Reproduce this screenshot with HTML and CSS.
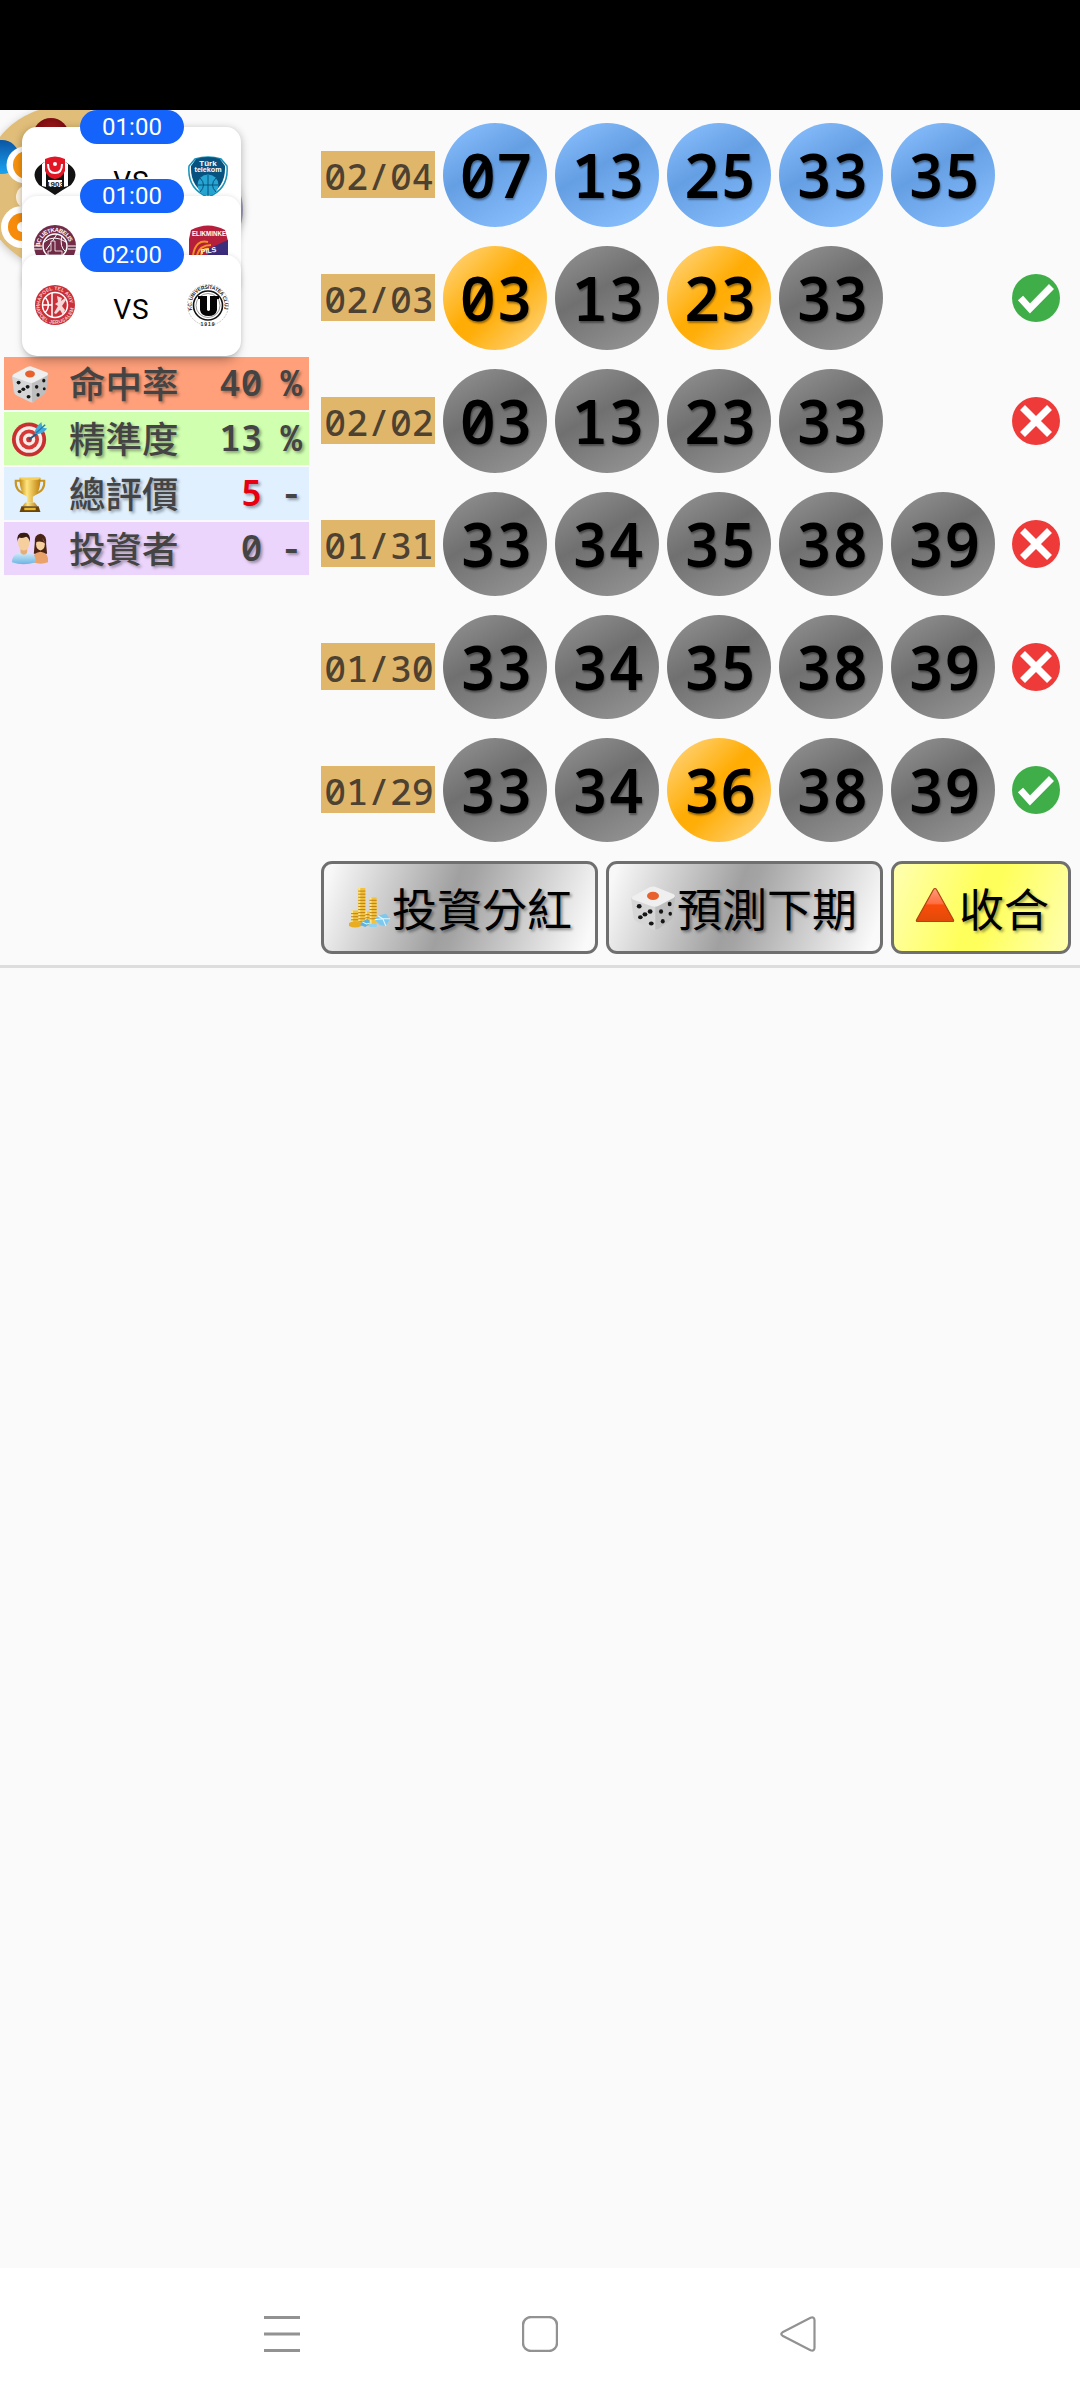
FILE: index.html
```
<!DOCTYPE html>
<html lang="zh-Hant">
<head>
  <meta charset="UTF-8" />
  <meta name="viewport" content="width=device-width, initial-scale=1.0"/>
  <title>投資分紅</title>
  <link rel="stylesheet" href="styles.css">
</head>
<body>
  <svg class="defs" aria-hidden="true">
    <defs>
      <linearGradient id="gold" x1="0" x2="1">
        <stop offset="0" stop-color="#c48a12"/><stop offset=".35" stop-color="#ffe680"/><stop offset="1" stop-color="#c07f0c"/>
      </linearGradient>
      <linearGradient id="flame" x1="0" y1="0" x2="0" y2="1">
        <stop offset="0" stop-color="#ff9a7a"/><stop offset=".45" stop-color="#ff6f42"/><stop offset=".5" stop-color="#fa4c0c"/><stop offset="1" stop-color="#e04a08"/>
      </linearGradient>
      <linearGradient id="shirt" x1="0" y1="0" x2="0" y2="1">
        <stop offset="0" stop-color="#d6effc"/><stop offset="1" stop-color="#6cb4e2"/>
      </linearGradient>
      <radialGradient id="redBall"><stop offset="0" stop-color="#c52222"/><stop offset="1" stop-color="#7b0d12"/></radialGradient>
      <linearGradient id="blueBall" x1="0" y1="0" x2="0" y2="1"><stop offset="0" stop-color="#0b55a4"/><stop offset="1" stop-color="#19a4f2"/></linearGradient>

      <symbol id="dice" viewBox="0 0 40 40">
        <path d="M1 11 22 18 24 39Q22 40 19 38.500L6 32Q3.500 31 3 28Z" fill="#d6d6d6"/>
        <path d="M22 18 39.500 10 37 28Q36.500 30 34 31.500L25 38Q23.500 39 22 39Z" fill="#bebebe"/>
        <path d="M3 9.500 17 2Q20 .5 23 2L38 8Q40 9.500 38 11L25 18Q22 19.500 19 18.500L2.500 12.500Q.5 11 3 9.500Z" fill="#efefef"/>
        <ellipse cx="20" cy="9.500" rx="5.200" ry="3.600" fill="#e8602c"/>
        <g fill="#161616">
          <ellipse cx="8" cy="18.500" rx="2.100" ry="1.900"/><ellipse cx="17.500" cy="23" rx="2.100" ry="1.900"/><ellipse cx="13" cy="25.500" rx="2.100" ry="1.900"/><ellipse cx="9" cy="28" rx="2" ry="1.800"/><ellipse cx="18.500" cy="33.500" rx="2.100" ry="1.800"/>
          <ellipse cx="34.500" cy="16.500" rx="1.700" ry="1.900"/><ellipse cx="27" cy="23" rx="1.800" ry="2"/><ellipse cx="35" cy="25" rx="1.500" ry="1.700"/><ellipse cx="28.500" cy="31.500" rx="1.700" ry="1.900"/>
        </g>
      </symbol>

      <symbol id="target" viewBox="0 0 40 40">
        <circle cx="19" cy="20.500" r="18" fill="#c92f30"/>
        <circle cx="19" cy="20.500" r="14" fill="#f7ece8"/>
        <circle cx="19" cy="20.500" r="10.500" fill="#d43b38"/>
        <circle cx="19" cy="20.500" r="6.500" fill="#f7ece8"/>
        <circle cx="19" cy="20.500" r="3" fill="#cf3333"/>
        <path d="M19 20.500 30 12" stroke="#1b5a86" stroke-width="2"/>
        <path d="M25 14Q25 8 32 2L33 8 38 9Q34 15 26 15Z" fill="#44a8d8"/>
        <path d="M26 14 36 5" stroke="#1f7db4" stroke-width="1.500"/>
      </symbol>

      <symbol id="trophy" viewBox="0 0 40 40">
        <path d="M10 6H5Q4 17 15 20M30 6h5Q36 17 25 20" fill="none" stroke="#c8951f" stroke-width="2.200"/>
        <path d="M9 3H31Q31 20 23 23V29H17V23Q9 20 9 3Z" fill="url(#gold)"/>
        <ellipse cx="20" cy="4" rx="11" ry="1.500" fill="#f5d15b"/>
        <path d="M15 29H25L28 33H12Z" fill="url(#gold)"/>
        <path d="M11 33H29L31 39H9Z" fill="#6b4508"/>
        <path d="M14 34.500H26V37H14Z" fill="#e8b92f"/>
      </symbol>

      <symbol id="people" viewBox="0 0 40 40">
        <path d="M25 14Q24 5 31 4Q38 5 37 15L38 25H24Z" fill="#4a2414"/>
        <path d="M23 34Q22 24 31 23Q40 24 39 34Q31 37 23 34Z" fill="#e9a36a"/>
        <ellipse cx="31" cy="15" rx="4.600" ry="6.500" fill="#f6cf9e"/>
        <path d="M26 13Q27 7 32 7L36 14Q31 11 26 13Z" fill="#4a2414"/>
        <path d="M1 34Q1 24 14 23Q27 24 26 34Q13 38 1 34Z" fill="url(#shirt)"/>
        <path d="M10 19H17V24Q13.500 28 10 24Z" fill="#e5ad78"/>
        <ellipse cx="13.500" cy="13.500" rx="6" ry="8" fill="#f6cf9e"/>
        <path d="M7 13Q5 3 13 3Q21 2 20 13Q19 8 16 7Q11 9 9 8Q7 9 7 13Z" fill="#3a1d10"/>
      </symbol>

      <symbol id="coins" viewBox="0 0 40 40">
        <path d="M9 1H16V38H9ZM20 10H27V36H20ZM2 23H9V38H2ZM16 24H21V38H16Z" fill="#f3c23c"/>
        <path d="M10 1V37M21 10V36M3 23V38M16.500 24V37" stroke="#fde58a" stroke-width="2"/>
        <path d="M9 4H16M9 7H16M9 10H16M9 13H16M9 16H16M9 19H16M9 22H16M9 25H16M9 28H16M9 31H16M9 34H16M20 13H27M20 16H27M20 19H27M20 22H27M20 25H27M20 28H27M20 31H27M2 26H9M2 29H9M2 32H9M2 35H9M16 27H20M16 30H20M16 33H20" stroke="#b67a10" stroke-width=".9"/>
        <path d="M0 35Q6 32 12 35V38Q6 41 0 38Z" fill="#e9ad22"/>
        <path d="M28 28 36 26 40 31 36 38 30 37 25 32Z" fill="#7cc8ef"/>
        <path d="M28 28 33 31 40 31M33 31 36 38M33 31 25 32" stroke="#e2f7ff" fill="none"/>
        <path d="M13 34 18 31 21 35 16 39 11 37Z" fill="#59b4e4"/>
        <path d="M13 34 17 36 21 35" stroke="#e2f7ff" fill="none"/>
        <path d="M20 36H27V39H20Z" fill="#8fd1f2"/>
      </symbol>

      <symbol id="triangle" viewBox="0 0 40 36">
        <path d="M20 1.500Q21 1.500 21.500 2.500L38.500 33Q39 34.500 37.500 34.500H2.500Q1 34.500 1.500 33L18.500 2.500Q19 1.500 20 1.500Z" fill="url(#flame)" stroke="#b0450e" stroke-width="1.200"/>
      </symbol>

      <symbol id="hit" viewBox="0 0 48 48">
        <circle cx="24" cy="24" r="24" fill="#3fae49"/>
        <path d="M8.500 24 18 34.500 39.500 12.500" fill="none" stroke="#fff" stroke-width="7"/>
      </symbol>
      <symbol id="miss" viewBox="0 0 48 48">
        <circle cx="24" cy="24" r="24" fill="#ee3a39"/>
        <path d="M10.500 10.500 37.500 37.500M37.500 10.500 10.500 37.500" stroke="#fff" stroke-width="7"/>
      </symbol>

      <symbol id="besiktas" viewBox="0 0 42 42">
        <path d="M5 10Q21-4 37 10Q46 18 37 29Q30 33 21 39Q12 33 5 29Q-4 18 5 10Z" fill="#121212"/>
        <path d="M8 8 12 5V31L8 30ZM30 5 34 8V30L30 31ZM14 24H28V31H14Z" fill="#fff"/>
        <path d="M11 3Q21-2 31 3V15Q28 22 21 23Q14 22 11 15Z" fill="#e31626"/>
        <path d="M14 8Q14 17 21 17Q28 17 28 8" fill="none" stroke="#fff" stroke-width="2"/>
        <circle cx="21" cy="8" r="2" fill="#fff"/>
        <text x="21" y="31" font-size="8" font-weight="700" text-anchor="middle" fill="#222">1903</text>
      </symbol>

      <symbol id="telekom" viewBox="0 0 42 42">
        <path d="M8 3Q21-1 34 3L40 10Q42 33 21 41Q0 33 2 10Z" fill="#fff" stroke="#1691b8" stroke-width="1.500"/>
        <path d="M9 3Q21-1 33 3L38 10Q39 31 21 39Q3 31 4 10Z" fill="#07527f"/>
        <circle cx="21" cy="29" r="10.500" fill="#27a5d2"/>
        <path d="M21 19V40M10.500 29H31.500M13 22Q20 29 13 36M29 22Q22 29 29 36" fill="none" stroke="#07527f"/>
        <text x="21" y="9.500" font-size="8" font-weight="700" text-anchor="middle" fill="#fff">Türk</text>
        <text x="21" y="16" font-size="7" font-weight="700" text-anchor="middle" textLength="27" lengthAdjust="spacingAndGlyphs" fill="#fff">telekom</text>
      </symbol>

      <symbol id="letkabelis" viewBox="0 0 42 42">
        <circle cx="21" cy="21" r="21" fill="#722c48"/>
        <path id="arcA" d="M6 22A15 15 0 0 1 36 22" fill="none"/>
        <circle cx="21" cy="21" r="12" fill="#722c48" stroke="#fff" stroke-width="1.500"/>
        <path d="M10 17Q20 9 32 17M12 25Q20 14 23 9M28 11Q25 22 32 27" fill="none" stroke="#fff"/>
        <path d="M0 21H8M34 21H42M0 24H8M34 24H42" stroke="#fff"/>
        <text font-size="6" font-weight="700" fill="#fff"><textPath href="#arcA" textLength="42">BC LIETKABELIS</textPath></text>
        <path d="M17 16H21V26H28V30H14V26H17Z" fill="#722c48" stroke="#fff" stroke-width=".8"/>
      </symbol>

      <symbol id="dinamo" viewBox="0 0 42 42">
        <path d="M4 5Q21-4 38 5L41 16V42H2V14Z" fill="#b51f3c"/>
        <path d="M21 24 41 15V42H21Z" fill="#3c2d7d"/>
        <text x="22" y="11" font-size="8" font-weight="700" text-anchor="middle" textLength="34" lengthAdjust="spacingAndGlyphs" fill="#fff">ELIKMINKE</text>
        <path d="M6 30Q9 14 21 17M10 30Q13 20 24 20M14 30Q15 23 22 24" fill="none" stroke="#f29222" stroke-width="2"/>
        <text x="22" y="28" font-size="7" font-weight="700" transform="rotate(-10 22 28)" text-anchor="middle" fill="#fff">PILS</text>
      </symbol>

      <symbol id="hapoel" viewBox="0 0 42 42">
        <circle cx="21" cy="21" r="20" fill="#c93039"/>
        <path id="arcB" d="M6 21A15 15 0 0 1 36 21" fill="none"/>
        <path id="arcC" d="M2 21A19 19 0 0 0 40 21" fill="none"/>
        <text font-size="5" font-weight="700" fill="#f5c9c9"><textPath href="#arcB" textLength="45">HAPOEL TEL AVIV</textPath></text>
        <text font-size="5" font-weight="700" fill="#f5c9c9"><textPath href="#arcC" textLength="56">HAPOEL JERUSALEM</textPath></text>
        <circle cx="21" cy="21" r="12.500" fill="#c93039" stroke="#fff" stroke-width="1.500"/>
        <path d="M18 9V33M8.500 21H18M11 13Q18 21 11 29" fill="none" stroke="#fff" stroke-width="1.500"/>
        <path d="M23 12 28 14 27 17 31 14 32 16 28 22 31 26 29 31 26 26 22 30 20 29 24 22 21 20 24 18Z" fill="#f7d8d6"/>
      </symbol>

      <symbol id="ucluj" viewBox="0 0 42 42">
        <circle cx="21" cy="21" r="20.500" fill="#fff" stroke="#bbb" stroke-width=".8" stroke-dasharray="2 1"/>
        <path id="arcD" d="M5.200 26A16.500 16.500 0 1 1 36.800 26" fill="none"/>
        <text font-size="5" font-weight="700" fill="#222"><textPath href="#arcD" textLength="60">F.C. UNIVERSITATEA CLUJ</textPath></text>
        <circle cx="21" cy="21.500" r="14.500" fill="#fff" stroke="#111" stroke-width="1.600"/>
        <circle cx="21" cy="21.500" r="12" fill="#fff" stroke="#555" stroke-width=".6"/>
        <path d="M11 12H20V26Q21.500 28 23 26V12H32V15H30V26Q29 32 21.500 32Q14 32 13 26V15H11Z" fill="#050505"/>
        <text x="21" y="41.500" font-size="5" font-weight="700" text-anchor="middle" letter-spacing="1" fill="#222">1919</text>
      </symbol>
    </defs>
  </svg>

  <div class="status-bar"></div>

  <main class="content">
    <section class="result">
      <div class="side">
        <div class="promo">
          <svg class="lotto" viewBox="0 0 260 170">
            <circle cx="64" cy="78" r="82" fill="#e0bd78"/>
            <circle cx="51" cy="26" r="18" fill="url(#redBall)"/>
            <circle cx="2" cy="47" r="17" fill="url(#blueBall)"/>
            <circle cx="28" cy="87" r="12" fill="#fff3df"/>
            <circle cx="25" cy="55" r="18.500" fill="#fff"/>
            <circle cx="27" cy="55" r="14" fill="#f7930d"/>
            <circle cx="22" cy="117" r="21" fill="#fff"/>
            <circle cx="22" cy="117" r="14" fill="#f78c0c"/>
            <circle cx="22" cy="117" r="5" fill="#fff"/>
            <circle cx="191" cy="100" r="52" fill="#a79dbd"/>
          </svg>

          <div class="matches">
            <div class="match first">
              <span class="time">01:00</span>
              <svg class="logo"><use href="#besiktas"/></svg>
              <span class="vs">VS</span>
              <svg class="logo"><use href="#telekom"/></svg>
            </div>
            <div class="match second">
              <span class="time">01:00</span>
              <svg class="logo"><use href="#letkabelis"/></svg>
              <svg class="logo"><use href="#dinamo"/></svg>
            </div>
            <div class="match third">
              <span class="time">02:00</span>
              <svg class="logo"><use href="#hapoel"/></svg>
              <span class="vs">VS</span>
              <svg class="logo"><use href="#ucluj"/></svg>
            </div>
          </div>
        </div>

        <div class="stats">
          <div class="stat rate"><svg class="stat-icon"><use href="#dice"/></svg><span class="name">命中率</span><span class="value">40</span><span class="unit">%</span></div>
          <div class="stat accuracy"><svg class="stat-icon"><use href="#target"/></svg><span class="name">精準度</span><span class="value">13</span><span class="unit">%</span></div>
          <div class="stat score"><svg class="stat-icon"><use href="#trophy"/></svg><span class="name">總評價</span><span class="value red">5</span><span class="unit">-</span></div>
          <div class="stat investor"><svg class="stat-icon"><use href="#people"/></svg><span class="name">投資者</span><span class="value">0</span><span class="unit">-</span></div>
        </div>
      </div>

      <div class="draws">
        <div class="draw">
          <span class="date">02/04</span>
          <div class="balls"><span class="ball blue">07</span><span class="ball blue">13</span><span class="ball blue">25</span><span class="ball blue">33</span><span class="ball blue">35</span></div>
        </div>
        <div class="draw">
          <span class="date">02/03</span>
          <div class="balls"><span class="ball orange">03</span><span class="ball">13</span><span class="ball orange">23</span><span class="ball">33</span></div>
          <svg class="mark"><use href="#hit"/></svg>
        </div>
        <div class="draw">
          <span class="date">02/02</span>
          <div class="balls"><span class="ball">03</span><span class="ball">13</span><span class="ball">23</span><span class="ball">33</span></div>
          <svg class="mark"><use href="#miss"/></svg>
        </div>
        <div class="draw">
          <span class="date">01/31</span>
          <div class="balls"><span class="ball">33</span><span class="ball">34</span><span class="ball">35</span><span class="ball">38</span><span class="ball">39</span></div>
          <svg class="mark"><use href="#miss"/></svg>
        </div>
        <div class="draw">
          <span class="date">01/30</span>
          <div class="balls"><span class="ball">33</span><span class="ball">34</span><span class="ball">35</span><span class="ball">38</span><span class="ball">39</span></div>
          <svg class="mark"><use href="#miss"/></svg>
        </div>
        <div class="draw">
          <span class="date">01/29</span>
          <div class="balls"><span class="ball">33</span><span class="ball">34</span><span class="ball orange">36</span><span class="ball">38</span><span class="ball">39</span></div>
          <svg class="mark"><use href="#hit"/></svg>
        </div>

        <div class="buttons">
          <button class="btn wide"><svg class="btn-icon"><use href="#coins"/></svg>投資分紅</button>
          <button class="btn wide"><svg class="btn-icon dice-icon"><use href="#dice"/></svg>預測下期</button>
          <button class="btn yellow"><svg class="btn-icon up"><use href="#triangle"/></svg>收合</button>
        </div>
      </div>
    </section>
  </main>

  <nav class="nav-bar">
    <svg viewBox="0 0 36 36"><path d="M0 1.500H36M0 18H36M0 34.500H36" stroke-width="3"/></svg>
    <svg viewBox="0 0 36 36"><rect x="1" y="1" width="34" height="34" rx="8" stroke-width="2.400"/></svg>
    <svg viewBox="0 0 36 36"><path d="M2.500 16.300 30.500 1.800Q34.300 .5 34.500 4V32Q34.300 35.500 30.500 34.200L2.500 19.700Q0 18 2.500 16.300Z" stroke-width="2.200"/></svg>
  </nav>
</body>
</html>
```

FILE: styles.css
```
* {
  box-sizing: border-box;
}

body {
  margin: 0;
  height: 2400px;
  display: flex;
  flex-direction: column;
  background: #fafafa;
  font-family: "Noto Sans CJK TC", "Noto Sans", sans-serif;
  overflow: hidden;
}

.defs {
  position: absolute;
  width: 0;
  height: 0;
}

.status-bar {
  height: 110px;
  background: #000;
}

.content {
  flex: 1;
}

.result {
  display: flex;
  height: 858px;
  border-bottom: 3px solid #ddd;
}

.side {
  width: 321px;
  padding-left: 4px;
}

/* floating match cards over the lottery logo */
.promo {
  position: relative;
  height: 247px;
  margin-left: -4px;
}

.lotto {
  position: absolute;
  left: 0;
  top: 0;
  width: 260px;
  height: 170px;
  filter: drop-shadow(0 2px 4px rgba(0, 0, 0, 0.2));
}

.matches {
  position: absolute;
  left: 22px;
  top: 17px;
  z-index: 1;
}

.match {
  position: relative;
  display: flex;
  align-items: flex-start;
  justify-content: space-between;
  width: 219px;
  height: 101px;
  padding: 29px 12px 0;
  background: #fff;
  border-radius: 15px;
  box-shadow: 0 2px 9px rgba(0, 0, 0, 0.3);
}

.second {
  margin-top: -32px;
  box-shadow: 0 0 5px rgba(0, 0, 0, 0.12);
}

.third {
  margin-top: -42px;
  box-shadow: 0 0 5px rgba(0, 0, 0, 0.12), 0 8px 12px -5px rgba(0, 0, 0, 0.35);
}

.time {
  position: absolute;
  left: 58px;
  top: -17px;
  width: 104px;
  height: 34px;
  border-radius: 17px;
  background: #1463fb;
  color: #fff;
  font: 400 24px/34px Roboto, sans-serif;
  text-align: center;
}

.logo {
  width: 42px;
  height: 42px;
  font-family: "Liberation Sans", Arial, sans-serif;
}

.vs {
  color: #000;
  font: 400 28px/51px Roboto, sans-serif;
  letter-spacing: 1px;
}

.stats {
  display: flex;
  flex-direction: column;
  gap: 2px;
  width: 305px;
}

.stat {
  display: flex;
  align-items: center;
  height: 53px;
  padding: 0 7px;
  color: #444;
  font-size: 36.5px;
  font-weight: 500;
  text-shadow: 2px 2px 3px rgba(0, 0, 0, 0.35);
}

.rate { background: #ffa07a; }
.accuracy { background: #d0ffb0; }
.score { background: #e0f0ff; }
.investor { background: #ecd5fc; }

.stat-icon {
  width: 38px;
  height: 38px;
}

.name {
  margin-left: 20px;
  line-height: 51px;
  height: 53px;
}

.value,
.unit {
  height: 53px;
  font-family: "Noto Sans Mono", "Noto Sans", monospace;
  font-size: 36px;
  font-weight: 600;
  line-height: 51px;
}

.value {
  flex: 1;
  text-align: right;
}

.unit {
  margin-left: 18px;
}

.red {
  color: #e60012;
}

.draws {
  flex: 1;
  padding-top: 3px;
}

.draw {
  display: flex;
  align-items: center;
  height: 123px;
  padding-right: 20px;
}

.date {
  width: 114px;
  height: 47px;
  margin-right: 8px;
  padding-left: 2px;
  background: #e0b76a;
  color: #4d4132;
  font: 500 36.5px/50px "Noto Sans Mono", "Noto Sans", monospace;
  text-align: center;
}

.balls {
  display: flex;
  gap: 8px;
}

.ball {
  width: 104px;
  height: 104px;
  padding-left: 2px;
  border-radius: 50%;
  background: linear-gradient(150deg, #8e8e8e 8%, #707070 42%, #929292 90%);
  color: #000;
  font: 600 61px/103px "Noto Sans Mono", "Noto Sans", monospace;
  text-align: center;
  text-shadow: 1px 2px 2px rgba(0, 0, 0, 0.4);
}

.blue {
  background: linear-gradient(150deg, #83bafa 10%, #659fe3 42%, #83bafa 85%);
}

.orange {
  background: linear-gradient(135deg, #ffd275 8%, #ffad05 45%, #ffae08 55%, #ffd070 90%);
}

.mark {
  width: 48px;
  height: 48px;
  margin-left: auto;
}

.buttons {
  display: flex;
  gap: 8px;
  padding-top: 10px;
}

.btn {
  display: flex;
  align-items: center;
  justify-content: center;
  width: 180px;
  height: 93px;
  padding: 0 0 0 2px;
  border: 3px solid #6f6f6f;
  border-radius: 11px;
  background: linear-gradient(110deg, #f8f8f8 3%, #a0a0a0 46%, #a4a4a4 51%, #fafafa 96%);
  color: #000;
  font: 400 45px/87px "Noto Sans CJK TC", sans-serif;
  text-shadow: 2px 2px 3px rgba(0, 0, 0, 0.4);
}

.wide {
  width: 277px;
}

.yellow {
  background: linear-gradient(110deg, #ffffa8 5%, #ffff5c 45%, #ffff5c 55%, #ffffa8 95%);
}

.btn-icon {
  width: 41px;
  height: 41px;
  margin-right: 2px;
}

.dice-icon {
  width: 46px;
  height: 46px;
  margin: 0 1px 0 -4px;
}

.up {
  width: 40px;
  height: 36px;
  margin: -5px 4px 0 0;
}

.nav-bar {
  display: flex;
  justify-content: space-between;
  height: 132px;
  padding: 48px 264px 0;
  background: #fff;
}

.nav-bar svg {
  width: 36px;
  height: 36px;
  fill: none;
  stroke: #929292;
}
```
